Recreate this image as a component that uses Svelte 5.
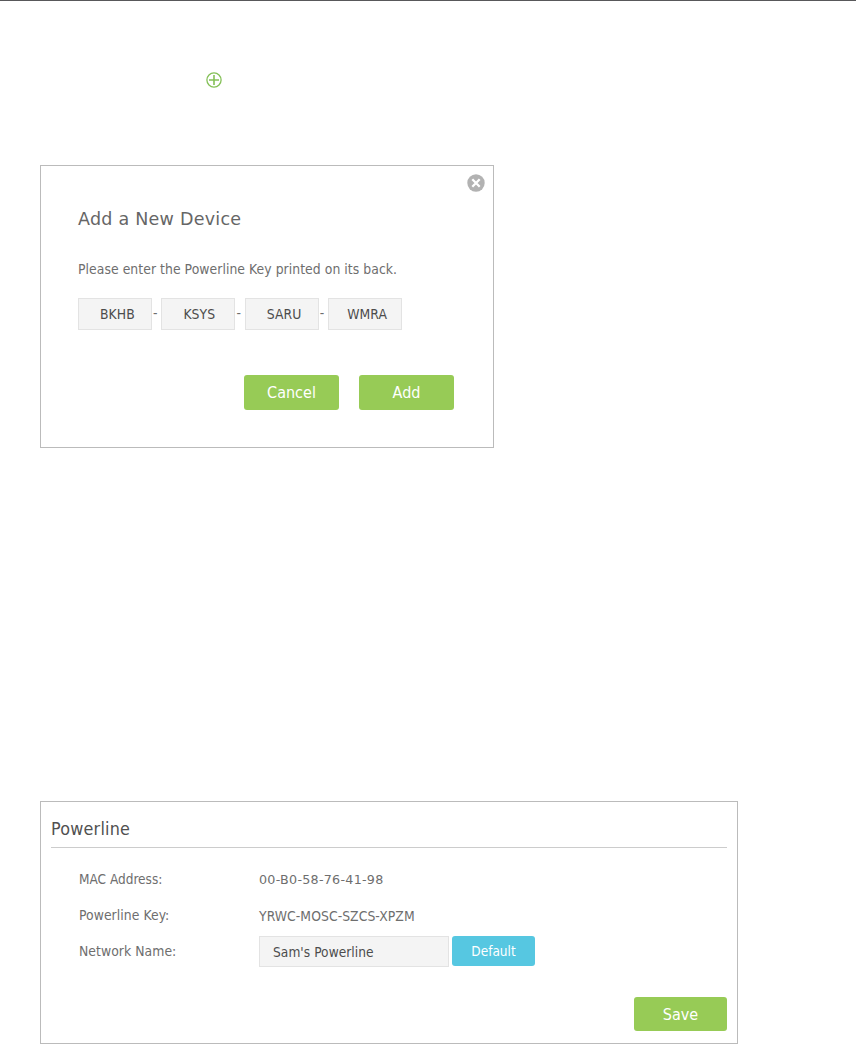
<script lang="ts">
  let keyParts = $state(["BKHB", "KSYS", "SARU", "WMRA"])
  let networkName = $state("Sam's Powerline")
  const info = [
    { label: "MAC Address:", value: "00-B0-58-76-41-98", cls: "mac" },
    { label: "Powerline Key:", value: "YRWC-MOSC-SZCS-XPZM", cls: "pkey" },
  ]
</script>

<main>
  <div class="step">
    <svg width="16" height="16" viewBox="0 0 16 16" fill="none" stroke="#84c057">
      <circle cx="8" cy="8" r="7.1" stroke-width="1.3" />
      <path d="M8 3v10M3 8h10" stroke-width="1.6" />
    </svg>
  </div>

  <section class="dialog">
    <button class="close" aria-label="Close">
      <svg width="18" height="18" viewBox="0 0 18 18">
        <circle cx="9" cy="9" r="8.7" fill="#b2b2b2" />
        <path d="M5.3 5.3l7.4 7.4M12.7 5.3l-7.4 7.4" stroke="#fff" stroke-width="2.3" />
      </svg>
    </button>
    <h2>Add a New Device</h2>
    <p>Please enter the Powerline Key printed on its back.</p>
    <div class="keys">
      {#each keyParts as part, i}
        {#if i > 0}<span class="dash">-</span>{/if}
        <div class="field key">{part}</div>
      {/each}
    </div>
    <div class="actions">
      <button class="btn">Cancel</button>
      <button class="btn">Add</button>
    </div>
  </section>

  <section class="panel">
    <h3>Powerline</h3>
    {#each info as row}
      <div class="row">
        <span class="label {row.cls}">{row.label}</span>
        <span class="value {row.cls}">{row.value}</span>
      </div>
    {/each}
    <div class="row">
      <span class="label">Network Name:</span>
      <div class="field network">{networkName}</div>
      <button class="btn default">Default</button>
    </div>
    <button class="btn save">Save</button>
  </section>
</main>

<style>
  :global(body) {
    background: #fff;
  }
  main {
    box-sizing: border-box;
    width: 856px;
    height: 1044px;
    padding-left: 40px;
    border-top: 1px solid #58585a;
    overflow: hidden;
    font-family: "DejaVu Sans Condensed", "DejaVu Sans", Verdana, sans-serif;
    font-stretch: condensed;
    font-size: 13.8px;
    letter-spacing: 0.06px;
    color: #6e6e6e;
  }
  main * {
    box-sizing: border-box;
  }
  svg {
    display: block;
  }
  button {
    border: none;
    padding: 0;
    font: inherit;
  }
  h2, .value.mac {
    font-family: "DejaVu Sans", Verdana, sans-serif;
    font-stretch: normal;
  }
  .step {
    height: 164px;
    padding: 71px 0 0 166px;
  }

  .dialog {
    position: relative;
    width: 454px;
    height: 283px;
    padding: 40px 39px 0 37px;
    border: 1px solid #bbb;
  }
  .close {
    position: absolute;
    top: 8px;
    right: 8px;
    background: none;
  }
  h2 {
    margin: 0;
    font-size: 17.5px;
    font-weight: normal;
    line-height: 26px;
    letter-spacing: 0.25px;
    color: #666;
  }
  p {
    margin: 27px 0 0;
    line-height: 20px;
    white-space: nowrap;
  }
  .keys {
    display: flex;
    margin-top: 19px;
  }
  .field {
    display: flex;
    align-items: center;
    height: 32px;
    background: #f4f4f4;
    border: 1px solid #e3e3e3;
    color: #4c4c4c;
  }
  .key {
    width: 74px;
    padding-left: 21px;
  }
  .key:last-child {
    padding-left: 18px;
  }
  .dash {
    width: 9.4px;
    padding-left: 1px;
    line-height: 30px;
  }
  .actions {
    display: flex;
    justify-content: flex-end;
    gap: 20px;
    margin-top: 45px;
  }
  .btn {
    width: 95px;
    height: 35px;
    border-radius: 3px;
    background: #97cb56;
    color: #fff;
    font-size: 16px;
    letter-spacing: 0;
  }

  .panel {
    display: flex;
    flex-direction: column;
    width: 698px;
    height: 243px;
    margin-top: 353px;
    padding: 0 10px;
    border: 1px solid #bbb;
  }
  h3 {
    height: 46px;
    margin: 0 0 13px;
    padding-top: 14px;
    border-bottom: 1px solid #ccc;
    font-size: 17.8px;
    font-weight: normal;
    line-height: 26px;
    letter-spacing: 0.22px;
    color: #505050;
  }
  .row {
    display: flex;
    align-items: center;
    height: 36px;
    padding-left: 28px;
  }
  .label {
    width: 180px;
    padding-bottom: 1px;
  }
  .label.mac {
    font-size: 13.5px;
    letter-spacing: 0;
  }
  .value {
    padding-top: 1px;
  }
  .value.mac {
    font-size: 12.7px;
    letter-spacing: 0.27px;
  }
  .network {
    width: 190px;
    height: 31px;
    margin-top: 1px;
    padding-left: 13px;
    font-size: 13.6px;
  }
  .default {
    width: 83px;
    height: 30px;
    margin-left: 3px;
    background: #56c7e1;
    font-size: 13.5px;
  }
  .save {
    width: 93px;
    height: 34px;
    margin-top: 28px;
    align-self: flex-end;
  }
</style>
